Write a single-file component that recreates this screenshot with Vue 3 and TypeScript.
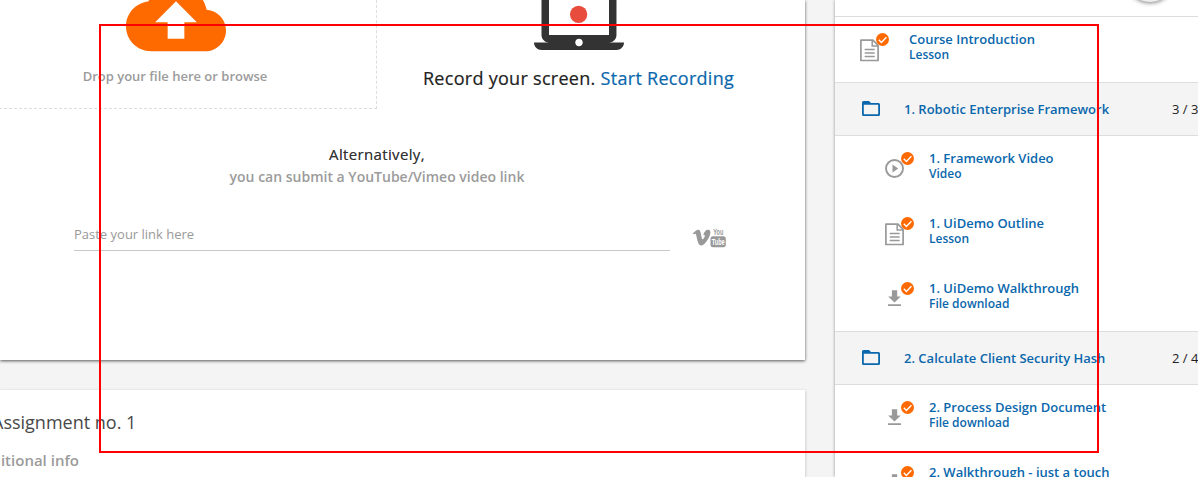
<script setup lang="ts">
type Kind = 'lesson' | 'video' | 'download'

interface Item {
  title: string
  type: string
  kind: Kind
}

interface Group {
  title: string
  progress: string
  items: Item[]
}

const intro: Item = { title: 'Course Introduction', type: 'Lesson', kind: 'lesson' }

const groups: Group[] = [
  {
    title: '1. Robotic Enterprise Framework',
    progress: '3 / 3',
    items: [
      { title: '1. Framework Video', type: 'Video', kind: 'video' },
      { title: '1. UiDemo Outline', type: 'Lesson', kind: 'lesson' },
      { title: '1. UiDemo Walkthrough', type: 'File download', kind: 'download' },
    ],
  },
  {
    title: '2. Calculate Client Security Hash',
    progress: '2 / 4',
    items: [
      { title: '2. Process Design Document', type: 'File download', kind: 'download' },
      { title: '2. Walkthrough - just a touch', type: 'File download', kind: 'download' },
    ],
  },
]

const sections: { group: Group | null; items: Item[] }[] = [
  { group: null, items: [intro] },
  ...groups.map((group) => ({ group, items: group.items })),
]
</script>

<template>
  <div class="page">
    <main class="main">
      <section class="card submit">
        <div class="sources">
          <div class="drop">
            <svg class="cloud" width="100" height="100" viewBox="0 0 24 24">
              <path
                fill="#ff6a00"
                d="M19.35 10.04C18.67 6.59 15.64 4 12 4 9.11 4 6.6 5.64 5.35 8.04 2.34 8.36 0 10.91 0 14c0 3.31 2.69 6 6 6h13c2.76 0 5-2.24 5-5 0-2.64-2.05-4.78-4.65-4.96zM14 13v4h-4v-4H7l5-5 5 5h-3z"
              />
            </svg>
            <p class="drop-text">Drop your file here or browse</p>
          </div>
          <div class="record">
            <svg class="laptop" width="90" height="90" viewBox="0 0 24 24">
              <path
                fill="#333"
                d="M20 18c1.1 0 1.99-.9 1.99-2L22 5c0-1.1-.9-2-2-2H4c-1.1 0-2 .9-2 2v11c0 1.1.9 2 2 2H0c0 1.1.9 2 2 2h20c1.1 0 2-.9 2-2h-4zM4 5h16v11H4V5zm8 14c-.55 0-1-.45-1-1s.45-1 1-1 1 .45 1 1-.45 1-1 1z"
              />
              <circle cx="11.9" cy="10.5" r="2.3" fill="#e74c3c" />
            </svg>
            <p class="record-text">Record your screen. <a>Start Recording</a></p>
          </div>
        </div>
        <p class="alt">Alternatively,</p>
        <p class="alt-sub">you can submit a YouTube/Vimeo video link</p>
        <div class="link-row">
          <div class="field">Paste your link here</div>
          <svg class="brands" width="36" height="20" viewBox="0 0 36 20" fill="#999">
            <path
              d="M.8 5.2C3 3.400 4.800 1.900 6 1.800c1.500-.1 2.300.9 2.700 2.900.5 2.500.9 5.300 1.500 6.300.6.900 1.300-.1 2-1.400.9-1.600 1.300-3.100-.9-2.600C12.100 3.700 14 1.700 16.200 1.800c2 .1 2.600 1.600 2 4.100-.7 3.400-3.300 7.300-6.200 10.300-1.800 1.600-3.900 2-5.200-.1C5.500 13.500 4.900 9.800 4.100 6.700 3.700 5.400 3 5.400 1.600 6.300z"
            />
            <rect x="18.500" y="8.300" width="15.300" height="10.900" rx="2.500" />
            <text class="brand-text" x="21.300" y="7.300" textLength="10" lengthAdjust="spacingAndGlyphs">You</text>
            <text class="brand-text inverse" x="19.700" y="17.300" textLength="13" lengthAdjust="spacingAndGlyphs">Tube</text>
          </svg>
        </div>
      </section>
      <section class="card assignment">
        <h2>Assignment no. 1</h2>
        <h3>Additional info</h3>
      </section>
    </main>

    <aside class="sidebar">
      <div class="side-head"><span class="toggle"></span></div>
      <template v-for="(section, s) in sections" :key="s">
        <div v-if="section.group" class="group">
          <svg class="folder" width="20" height="18" viewBox="0 0 20 18">
            <path
              fill="#0a67ac"
              fill-rule="evenodd"
              d="M2.500 1H8l2 2h7.500Q19 3 19 4.500v10Q19 16 17.500 16h-15Q1 16 1 14.500v-12Q1 1 2.500 1zM2.800 4.700v9.500h14.400V4.700z"
            />
          </svg>
          <span class="group-title">{{ section.group.title }}</span>
          <span class="progress">{{ section.group.progress }}</span>
        </div>
        <div v-for="item in section.items" :key="item.title" class="item" :class="{ nested: section.group }">
          <svg class="status" width="34" height="32" viewBox="0 0 34 32">
            <g v-if="item.kind === 'lesson'" fill="none" stroke="#999">
              <path stroke-width="1.700" d="M2.900 9.200h12l5.200 5.200v15.100H2.900z" stroke-linejoin="round" />
              <path stroke-width="1.500" d="M14.200 9.200v5.800H20" />
              <path stroke-width="1.300" stroke-linecap="round" d="M7.200 18.500h9M7.200 22h9M7.200 25.500h9" />
            </g>
            <g v-else-if="item.kind === 'video'">
              <circle cx="11.500" cy="18.500" r="8.500" fill="none" stroke="#999" stroke-width="1.900" />
              <path fill="#999" d="M9.500 14.500v8l5.700-4z" />
            </g>
            <path
              v-else
              fill="#999"
              d="M8.900 10.300h5.300v6.200h3.600l-6.300 6-6.300-6h3.700zM5 24.200h13v1.900H5z"
            />
            <circle cx="24.500" cy="8.500" r="6.500" fill="#ff6a00" />
            <path d="M20.800 8.800l2.600 2.600 5-5.200" fill="none" stroke="#fff" stroke-width="1.400" />
          </svg>
          <div class="label">
            <div class="title">{{ item.title }}</div>
            <div class="type">{{ item.type }}</div>
          </div>
        </div>
      </template>
    </aside>
    <div class="highlight"></div>
  </div>
</template>

<style>
body {
  margin: 0;
  overflow: hidden;
}
</style>

<style scoped>
.page {
  position: relative;
  display: flex;
  gap: 30px;
  width: 1198px;
  height: 477px;
  overflow: hidden;
  background: #f4f4f4;
  font-family: 'Open Sans', sans-serif;
  color: #333;
}
.page * {
  box-sizing: border-box;
}
p,
h2,
h3 {
  margin: 0;
  white-space: nowrap;
}
.main {
  flex: 0 0 805px;
  display: flex;
  flex-direction: column;
  gap: 30px;
}
.card {
  background: #fff;
  box-shadow: 0 1px 3px rgba(0, 0, 0, 0.25);
}
.submit {
  flex: 0 0 360px;
  box-shadow: 0 1px 3px rgba(0, 0, 0, 0.65);
}
.sources {
  display: flex;
  height: 109px;
  margin-left: -26px;
}
.drop,
.record {
  width: 403px;
  display: flex;
  flex-direction: column;
  align-items: center;
}
.drop {
  border-right: 1px dashed #ddd;
  border-bottom: 1px dashed #ddd;
}
.cloud {
  flex: none;
  margin-top: -32px;
  margin-left: 1px;
}
.drop-text {
  margin-top: -2px;
  font-size: 13px;
  line-height: 20px;
  font-weight: 600;
  color: #9b9b9b;
}
.laptop {
  flex: none;
  margin-top: -25px;
}
.record-text {
  font-size: 18px;
  line-height: 26px;
  font-weight: 400;
  letter-spacing: 0.29px;
  -webkit-text-stroke: 0.2px currentColor;
  color: #222;
}
.record-text a {
  color: #0a67ac;
}
.alt {
  margin-top: 34px;
  padding-right: 51px;
  text-align: center;
  font-size: 15px;
  line-height: 22px;
  font-weight: 400;
  letter-spacing: 0.35px;
  text-shadow: 0 0 0.5px rgba(51, 51, 51, 0.6);
}
.alt-sub {
  margin-top: 1px;
  padding-right: 51px;
  text-align: center;
  font-size: 14px;
  line-height: 22px;
  font-weight: 600;
  color: #9b9b9b;
}
.link-row {
  display: flex;
  align-items: flex-end;
  gap: 22px;
  margin: 36px 0 0 74px;
}
.field {
  width: 596px;
  height: 27px;
  border-bottom: 1px solid #c8c8c8;
  font-size: 13px;
  line-height: 20px;
  color: #999;
}
.brands {
  margin-bottom: 3px;
  overflow: visible;
}
.brand-text {
  font-family: 'Liberation Sans', sans-serif;
  font-size: 9.5px;
  font-weight: 700;
}
.inverse {
  fill: #fff;
}
.assignment {
  flex: 0 0 120px;
  padding-top: 17px;
}
.assignment h2 {
  margin-left: -8px;
  font-size: 18px;
  line-height: 30px;
  font-weight: 400;
  color: #484848;
}
.assignment h3 {
  width: 79px;
  display: flex;
  justify-content: flex-end;
  margin-top: 11px;
  font-size: 15px;
  line-height: 24px;
  font-weight: 600;
  color: #9b9b9b;
}
.sidebar {
  flex: 0 0 363px;
  background: #fff;
  box-shadow: 0 0 3px rgba(0, 0, 0, 0.4);
}
.side-head {
  position: relative;
  height: 17px;
  border-bottom: 1px solid #ddd;
}
.toggle {
  position: absolute;
  left: 291px;
  top: -46px;
  width: 48px;
  height: 48px;
  border-radius: 50%;
  background: #eee;
  box-shadow: 0 1px 4px rgba(0, 0, 0, 0.5);
}
.group {
  display: flex;
  align-items: center;
  height: 54px;
  padding-left: 26px;
  background: #f4f4f4;
  border-top: 1px solid #ddd;
  border-bottom: 1px solid #ddd;
}
.folder {
  flex: none;
}
.group-title {
  width: 268px;
  padding-left: 23px;
  font-size: 13px;
  font-weight: 600;
  color: #0a67ac;
  white-space: nowrap;
}
.progress {
  margin-left: 23px;
  font-size: 13px;
  white-space: nowrap;
  color: #222;
}
.item {
  display: flex;
  align-items: flex-start;
  height: 65px;
  padding: 14px 0 0 23px;
  color: #0a67ac;
}
.nested {
  padding-left: 48px;
}
.label {
  padding-left: 17px;
  font-weight: 600;
  white-space: nowrap;
}
.nested .label {
  padding-left: 12px;
}
.title {
  font-size: 13px;
  line-height: 16px;
}
.type {
  font-size: 12px;
  line-height: 15px;
}
.highlight {
  position: absolute;
  left: 99px;
  top: 24px;
  width: 1000px;
  height: 429px;
  border: 2px solid #f00;
}
</style>
